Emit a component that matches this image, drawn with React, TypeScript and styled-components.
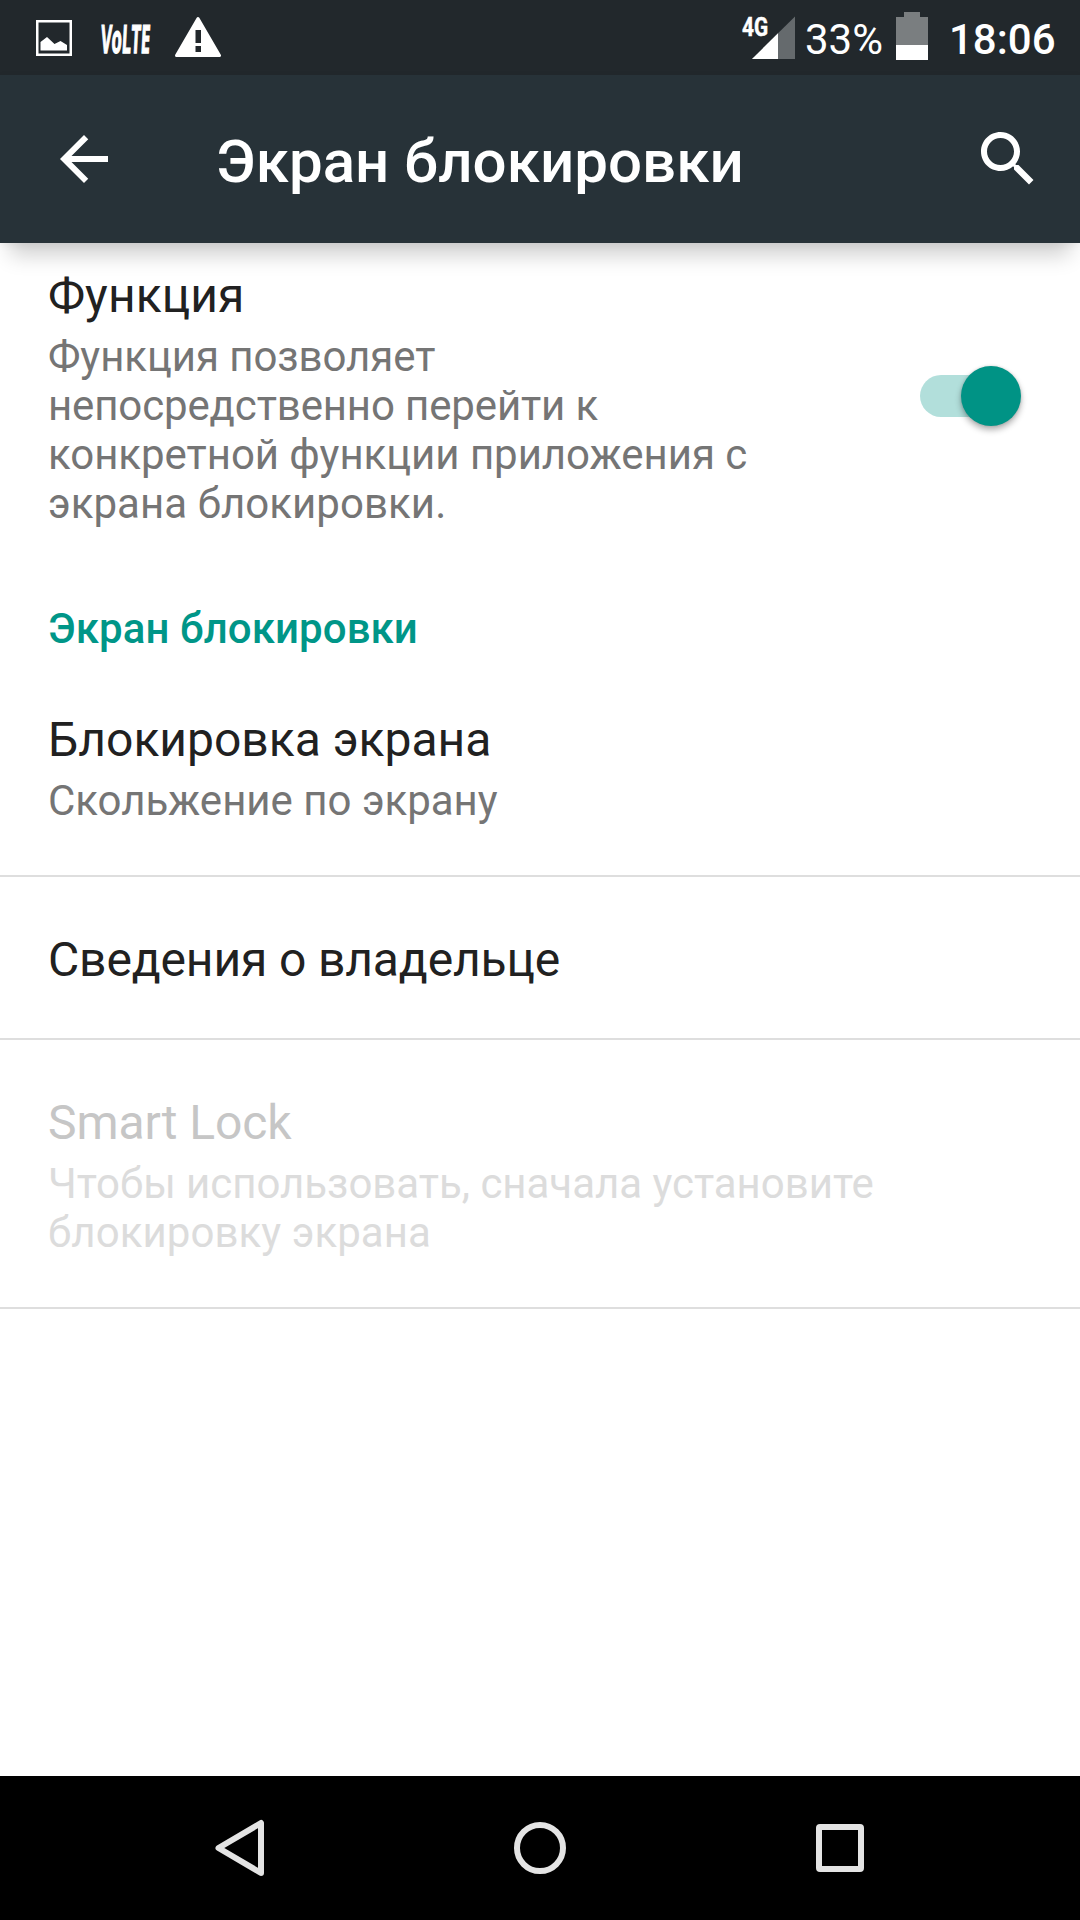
import React from "react";
import styled, { createGlobalStyle } from "styled-components";

const GlobalStyle = createGlobalStyle`
  * { box-sizing: border-box; }
  body { margin: 0; background: #fff; }
`;

const Screen = styled.div`
  display: flex;
  flex-direction: column;
  width: 1080px;
  height: 1920px;
  overflow: hidden;
  background: #fff;
  font-family: Roboto, "Noto Sans", sans-serif;
`;

const StatusBar = styled.div`
  display: flex;
  flex: none;
  justify-content: space-between;
  height: 75px;
  background: #22282c;
  color: #fff;
`;

const StatusGroup = styled.div`
  display: flex;
  align-items: flex-start;
`;

const StatusIcon = styled.svg<{ $left?: number }>`
  display: block;
  flex: none;
  margin-left: ${(p) => p.$left ?? 0}px;
`;

const VolteBadge = styled.div`
  width: 51px;
  height: 48px;
  margin: 14px 0 0 29px;
  font: 700 39px/48px "Open Sans", "Noto Sans", sans-serif;
  white-space: nowrap;

  span {
    display: inline-block;
    transform: skewX(-3deg) scaleX(0.425);
    transform-origin: 0 50%;
    -webkit-text-stroke: 1.4px #fff;
  }
`;

const NetworkIndicator = styled.div`
  position: relative;
  width: 54px;
  height: 75px;
`;

const NetworkLabel = styled.span`
  position: absolute;
  left: 1px;
  top: 12px;
  font-size: 26px;
  line-height: 30px;
  font-weight: 700;
  transform: scaleX(0.8);
  transform-origin: 0 50%;
  -webkit-text-stroke: 0.5px #fff;
`;

const StatusText = styled.span<{ $weight: number; $left: number; $width: number }>`
  width: ${(p) => p.$width}px;
  margin: 15px 0 0 ${(p) => p.$left}px;
  font-size: 42px;
  line-height: 49px;
  font-weight: ${(p) => p.$weight};
  white-space: nowrap;
`;

const AppBar = styled.header`
  position: relative;
  display: flex;
  flex: none;
  align-items: center;
  height: 168px;
  padding: 0 36px 0 48px;
  background: #273238;
  color: #fff;
  box-shadow: 0 22px 20px -10px rgba(0, 0, 0, 0.19), 0 2px 8px rgba(0, 0, 0, 0.06);
`;

const AppBarTitle = styled.h1`
  flex: 1;
  margin: 0 0 0 96px;
  padding-top: 5px;
  font-size: 60px;
  line-height: 70px;
  font-weight: 500;
  letter-spacing: 0.06px;
`;

const AppBarIcon = styled.svg`
  display: block;
  flex: none;
  width: 72px;
  height: 72px;
  fill: #fff;
`;

const Content = styled.main`
  display: flex;
  flex: 1;
  flex-direction: column;
`;

const FeatureRow = styled.section`
  display: flex;
  align-items: flex-start;
  justify-content: space-between;
  padding: 24px 48px 76px;
`;

const FeatureText = styled.div`
  width: 720px;
`;

const ItemTitle = styled.div<{ $disabled?: boolean; $tracking?: number }>`
  font-size: 48px;
  line-height: 57px;
  letter-spacing: ${(p) => p.$tracking ?? 0}px;
  color: ${(p) => (p.$disabled ? "#c6c6c6" : "#212121")};
`;

const ItemSummary = styled.div<{ $disabled?: boolean }>`
  margin-top: 8px;
  font-size: 42px;
  line-height: 49px;
  color: ${(p) => (p.$disabled ? "#dcdcdc" : "#757575")};
`;

const SummaryLine = styled.span<{ $tracking: number }>`
  display: block;
  white-space: nowrap;
  letter-spacing: ${(p) => p.$tracking}px;
`;

const Category = styled.h2`
  margin: 0;
  padding: 0 48px 4px;
  font-size: 42px;
  line-height: 49px;
  font-weight: 500;
  letter-spacing: 0.07px;
  color: #009688;
`;

const Item = styled.section`
  padding: 54px 48px 50px;
  border-bottom: 2px solid #dedede;
`;

const SwitchTrack = styled.div`
  display: flex;
  align-items: center;
  justify-content: flex-end;
  width: 102px;
  height: 42px;
  margin: 108px 10px 0 0;
  border-radius: 21px;
  background: linear-gradient(90deg, #b2dfdb 80px, transparent 80px);
`;

const SwitchThumb = styled.div`
  flex: none;
  width: 60px;
  height: 60px;
  margin: 0 1px 1px 0;
  border-radius: 50%;
  background: #009385;
  box-shadow: 0 4px 6px rgba(0, 0, 0, 0.3), 0 0 3px rgba(0, 0, 0, 0.15);
`;

const NavBar = styled.nav`
  display: flex;
  flex: none;
  align-items: center;
  justify-content: center;
  gap: 228px;
  height: 144px;
  background: #000;
`;

const NavIcon = styled.svg`
  display: block;
  width: 72px;
  height: 72px;
  fill: none;
  stroke: #e4e4e4;
  stroke-width: 6;
  stroke-linejoin: round;
`;

const featureSummary = [
  { text: "Функция позволяет", tracking: -0.07 },
  { text: "непосредственно перейти к", tracking: -0.13 },
  { text: "конкретной функции приложения с", tracking: -0.04 },
  { text: "экрана блокировки.", tracking: 0.06 },
];

const smartLockSummary = [
  { text: "Чтобы использовать, сначала установите", tracking: -0.03 },
  { text: "блокировку экрана", tracking: 0.07 },
];

export default function App() {
  return (
    <>
      <GlobalStyle />
      <Screen>
        <StatusBar>
          <StatusGroup>
            <StatusIcon $left={36} width="36" height="75" viewBox="0 0 36 75">
              <rect x="1.25" y="21.25" width="33.5" height="33.5" fill="none" stroke="#fff" strokeWidth="2.5" />
              <path d="M4.5 42 11 37l7.5 7 6-3 6.5 4v5.5H4.500z" fill="#fff" />
            </StatusIcon>
            <VolteBadge>
              <span>VoLTE</span>
            </VolteBadge>
            <StatusIcon $left={23} width="46" height="75" viewBox="0 0 46 75">
              <path
                d="M23 18.500 44.500 55.500H1.500z"
                fill="#fff"
                stroke="#fff"
                strokeWidth="3"
                strokeLinejoin="round"
              />
              <path d="M20.500 30h5.500v13h-5.500zM20.500 46h5.500v6h-5.500z" fill="#22282c" />
            </StatusIcon>
          </StatusGroup>
          <StatusGroup>
            <NetworkIndicator>
              <StatusIcon width="54" height="75" viewBox="0 0 54 75">
                <path d="M54 16.500V59H11z" fill="#656a6d" />
                <path d="M37 33.300V59H11z" fill="#fff" />
              </StatusIcon>
              <NetworkLabel>4G</NetworkLabel>
            </NetworkIndicator>
            <StatusText $weight={400} $left={10} $width={79}>33%</StatusText>
            <StatusIcon $left={12} width="32" height="75" viewBox="0 0 32 75">
              <path d="M8 12h16v5h8v28H0V17h8z" fill="#7a7e80" />
              <path d="M0 45h32v15H0z" fill="#fff" />
            </StatusIcon>
            <StatusText $weight={500} $left={21} $width={131}>18:06</StatusText>
          </StatusGroup>
        </StatusBar>

        <AppBar>
          <AppBarIcon viewBox="0 0 24 24">
            <path d="M20 11H7.830l5.590-5.590L12 4l-8 8 8 8 1.410-1.410L7.830 13H20v-2z" />
          </AppBarIcon>
          <AppBarTitle>Экран блокировки</AppBarTitle>
          <AppBarIcon viewBox="0 0 24 24">
            <path d="M15.500 14h-.79l-.28-.27C15.410 12.590 16 11.110 16 9.500 16 5.910 13.090 3 9.500 3S3 5.910 3 9.500 5.910 16 9.500 16c1.610 0 3.090-.59 4.230-1.570l.27.28v.79l5 4.990L20.490 19l-4.990-5zm-6 0C7.010 14 5 11.990 5 9.500S7.010 5 9.500 5 14 7.010 14 9.500 11.990 14 9.500 14z" />
          </AppBarIcon>
        </AppBar>

        <Content>
          <FeatureRow>
            <FeatureText>
              <ItemTitle $tracking={0.07}>Функция</ItemTitle>
              <ItemSummary>
                {featureSummary.map((line) => (
                  <SummaryLine key={line.text} $tracking={line.tracking}>{line.text}</SummaryLine>
                ))}
              </ItemSummary>
            </FeatureText>
            <SwitchTrack role="switch" aria-checked="true">
              <SwitchThumb />
            </SwitchTrack>
          </FeatureRow>
          <Category>Экран блокировки</Category>
          <Item>
            <ItemTitle>Блокировка экрана</ItemTitle>
            <ItemSummary>Скольжение по экрану</ItemSummary>
          </Item>
          <Item>
            <ItemTitle $tracking={-0.14}>Сведения о владельце</ItemTitle>
          </Item>
          <Item>
            <ItemTitle $disabled $tracking={-0.1}>Smart Lock</ItemTitle>
            <ItemSummary $disabled>
              {smartLockSummary.map((line) => (
                <SummaryLine key={line.text} $tracking={line.tracking}>{line.text}</SummaryLine>
              ))}
            </ItemSummary>
          </Item>
        </Content>

        <NavBar>
          <NavIcon viewBox="0 0 72 72">
            <path d="M14.500 36 57 11v50z" />
          </NavIcon>
          <NavIcon viewBox="0 0 72 72">
            <circle cx="36" cy="36" r="23" />
          </NavIcon>
          <NavIcon viewBox="0 0 72 72">
            <rect x="15" y="15" width="42" height="42" rx="1" />
          </NavIcon>
        </NavBar>
      </Screen>
    </>
  );
}
